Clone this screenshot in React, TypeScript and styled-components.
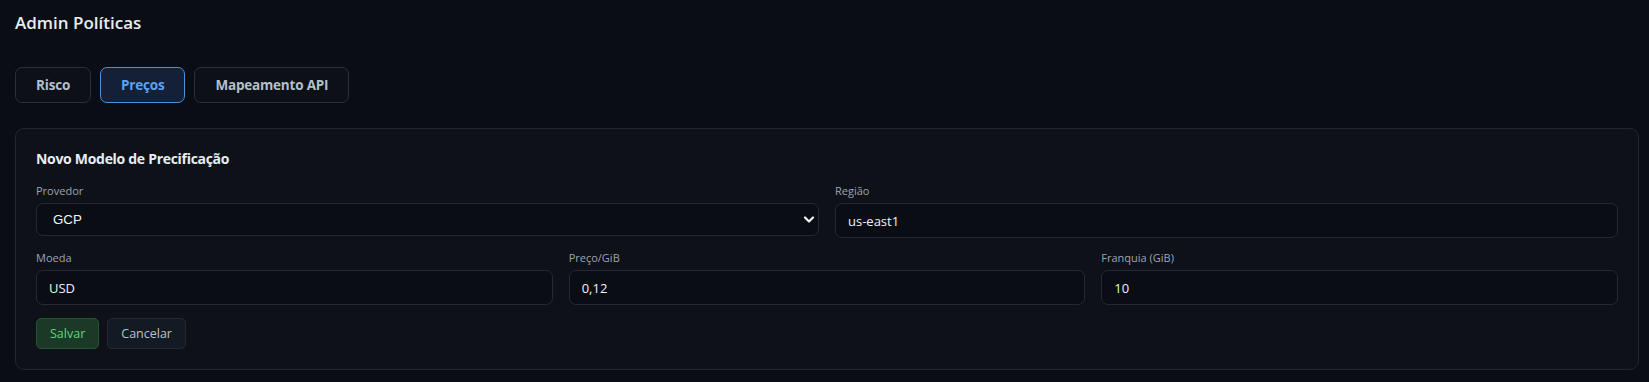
import React, { useState } from 'react';
import styled, { createGlobalStyle } from 'styled-components';

const GlobalStyle = createGlobalStyle`
  html, body {
    margin: 0;
    background: #0a0d14;
    color: #e6edf3;
    font-family: 'Open Sans', 'Noto Sans', sans-serif;
    color-scheme: dark;
  }
`;

const Page = styled.div`
  padding: 9px 10px 12px 15px;
`;

const PageTitle = styled.h1`
  font-size: 17px;
  line-height: 28px;
  font-weight: 600;
  margin: 0 0 30px;
  color: #e6edf3;
`;

const TabBar = styled.div`
  display: flex;
  gap: 9px;
  margin-bottom: 25px;
`;

const Tab = styled.button<{ $active?: boolean }>`
  height: 36px;
  padding: 0 20px;
  border-radius: 7px;
  font-family: inherit;
  font-size: 13.5px;
  letter-spacing: -0.2px;
  font-weight: 700;
  cursor: pointer;
  border: 1px solid ${(p) => (p.$active ? '#4c8fdc' : '#283039')};
  background: ${(p) => (p.$active ? '#132036' : '#0d1117')};
  color: ${(p) => (p.$active ? '#5ba3f6' : '#b4bfcc')};
`;

const Card = styled.section`
  background: #0e1118;
  border: 1px solid #1f2733;
  border-radius: 9px;
  padding: 20px;
`;

const CardTitle = styled.h2`
  font-size: 14px;
  line-height: 20px;
  letter-spacing: -0.3px;
  font-weight: 700;
  margin: 0 0 14px;
  color: #e6edf3;
`;

const FieldGrid = styled.div<{ $cols: number }>`
  display: grid;
  grid-template-columns: repeat(${(p) => p.$cols}, 1fr);
  column-gap: 16px;
  margin-bottom: 12px;
`;

const Field = styled.label`
  display: flex;
  flex-direction: column;
  min-width: 0;
`;

const FieldLabel = styled.span`
  font-size: 11px;
  line-height: 16px;
  color: #9aa5b3;
  margin-bottom: 4px;
`;

const TextInput = styled.input`
  box-sizing: border-box;
  height: 35px;
  padding: 0 12px;
  border-radius: 7px;
  border: 1px solid #222a36;
  background: #0a0d14;
  color: #eef2f6;
  font-family: inherit;
  font-size: 13px;
  outline: none;
`;

const SelectWrap = styled.div`
  position: relative;
`;

const Select = styled.select`
  box-sizing: border-box;
  width: 100%;
  height: 33px;
  padding: 0 12px 0 16px;
  border-radius: 7px;
  border: 1px solid #222a36;
  background: #0a0d14;
  color: #f2f5f8;
  font-family: 'Liberation Sans', Arial, sans-serif;
  font-size: 13.3px;
  appearance: none;
  outline: none;
`;

const Chevron = styled.svg`
  position: absolute;
  right: 4px;
  top: 12px;
  width: 12px;
  height: 9px;
  pointer-events: none;
`;

const Actions = styled.div`
  display: flex;
  gap: 8px;
  padding-top: 1px;
`;

const ActionButton = styled.button<{ $variant: 'save' | 'cancel' }>`
  height: 31px;
  padding: 0 13px;
  border-radius: 5px;
  font-family: inherit;
  font-size: 12.5px;
  cursor: pointer;
  border: 1px solid ${(p) => (p.$variant === 'save' ? '#265334' : '#202a36')};
  background: ${(p) => (p.$variant === 'save' ? '#1a3a27' : '#131a23')};
  color: ${(p) => (p.$variant === 'save' ? '#63d47c' : '#b7c2ce')};
`;

const tabs = ['Risco', 'Preços', 'Mapeamento API'];

export default function App() {
  const [tab, setTab] = useState('Preços');

  return (
    <Page>
      <GlobalStyle />
      <PageTitle>Admin Políticas</PageTitle>
      <TabBar>
        {tabs.map((t) => (
          <Tab key={t} $active={t === tab} onClick={() => setTab(t)}>
            {t}
          </Tab>
        ))}
      </TabBar>
      <Card>
        <CardTitle>Novo Modelo de Precificação</CardTitle>
        <FieldGrid $cols={2}>
          <Field>
            <FieldLabel>Provedor</FieldLabel>
            <SelectWrap>
              <Select defaultValue="GCP">
                <option>AWS</option>
                <option>GCP</option>
                <option>Azure</option>
              </Select>
              <Chevron viewBox="0 0 12 9">
                <path d="M2 2.5 L6 6.5 L10 2.5" fill="none" stroke="#f2f5f8" strokeWidth="2.2" strokeLinecap="round" strokeLinejoin="round" />
              </Chevron>
            </SelectWrap>
          </Field>
          <Field>
            <FieldLabel>Região</FieldLabel>
            <TextInput defaultValue="us-east1" />
          </Field>
        </FieldGrid>
        <FieldGrid $cols={3}>
          <Field>
            <FieldLabel>Moeda</FieldLabel>
            <TextInput defaultValue="USD" />
          </Field>
          <Field>
            <FieldLabel>Preço/GiB</FieldLabel>
            <TextInput defaultValue="0,12" />
          </Field>
          <Field>
            <FieldLabel>Franquia (GiB)</FieldLabel>
            <TextInput defaultValue="10" />
          </Field>
        </FieldGrid>
        <Actions>
          <ActionButton $variant="save">Salvar</ActionButton>
          <ActionButton $variant="cancel">Cancelar</ActionButton>
        </Actions>
      </Card>
    </Page>
  );
}
